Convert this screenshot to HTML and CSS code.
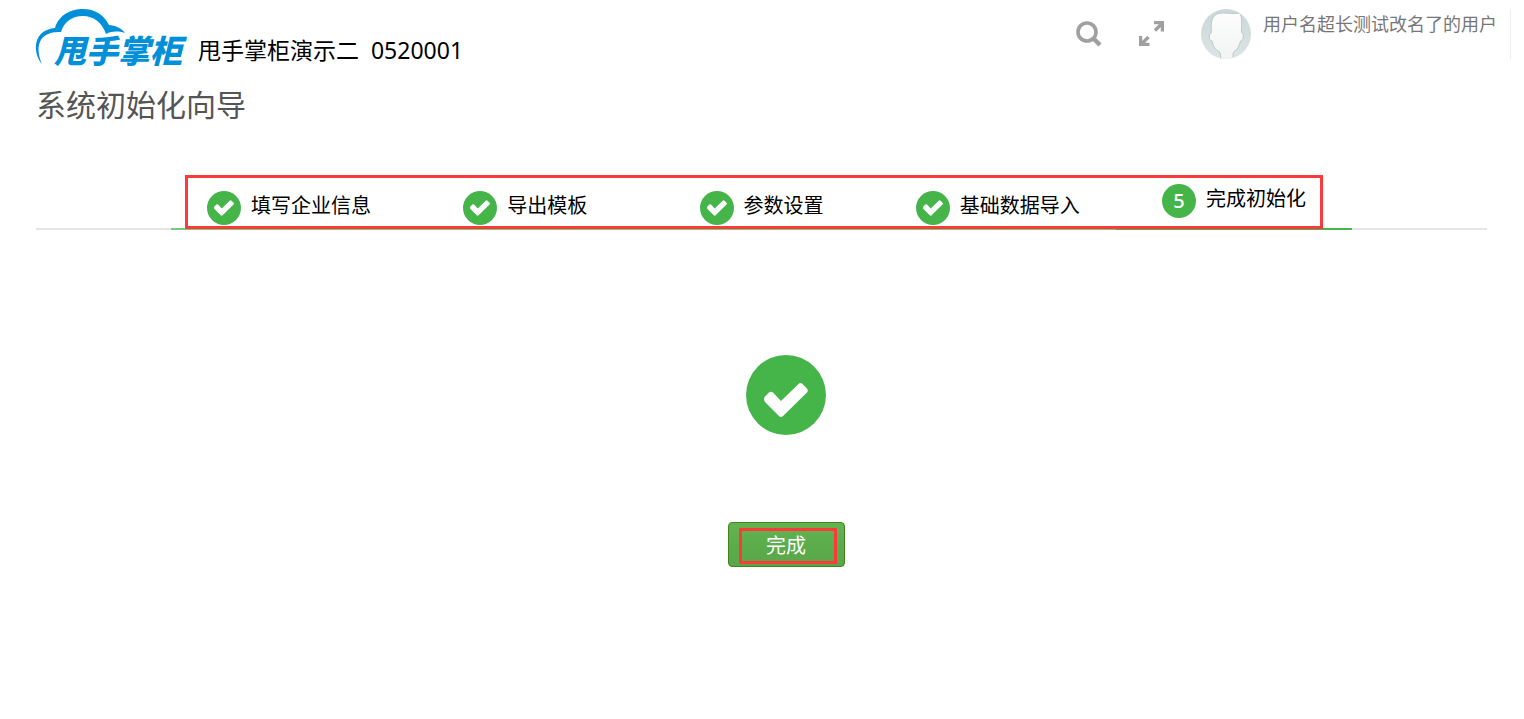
FILE: index.html
```
<!DOCTYPE html>
<html lang="zh-CN">
<head>
  <meta charset="UTF-8" />
  <meta name="viewport" content="width=device-width, initial-scale=1.0"/>
  <title>系统初始化向导</title>
  <link rel="stylesheet" href="styles.css">
</head>
<body>

  <header class="header">
    <a href="#" class="logo">
      <svg width="156" height="64" viewBox="0 0 156 64">
        <path d="M6 55C-4 43-3 21 19 19C23 5 36 0 47 0C59 0 68 6 73 16C82 17 86 20 89 24C82 22 76 22 70 25C66 13 57 7 47 7C36 7 28 13 25 23C4 22-2 36 6 55Z" fill="#008fd9"/>
        <text x="18" y="54" class="logo-text">甩手掌柜</text>
      </svg>
    </a>
    <span class="company">甩手掌柜演示二&nbsp; 0520001</span>

    <div class="tools">
      <button type="button" class="icon-btn" aria-label="搜索">
        <svg width="26" height="26" viewBox="0 0 26 26" fill="none" stroke="#a0a0a0">
          <circle cx="11" cy="11" r="9" stroke-width="3.600"/>
          <path d="M17.500 17.500L24 24" stroke-width="4.500"/>
        </svg>
      </button>
      <button type="button" class="icon-btn" aria-label="全屏">
        <svg width="26" height="26" viewBox="0 0 26 26" fill="none" stroke="#a0a0a0" stroke-width="3.300">
          <path d="M15 1.600H23.400V10.500M23 2.500L16 9.500M1.600 15V23.400H10.500M2.500 23L9.500 16"/>
        </svg>
      </button>
    </div>

    <div class="user">
      <svg width="50" height="50" viewBox="0 0 50 50">
        <defs>
          <linearGradient id="face" x1="0" y1="0" x2="0" y2="1">
            <stop offset="0" stop-color="#fcfdfc"/>
            <stop offset="1" stop-color="#f1f4f3"/>
          </linearGradient>
          <linearGradient id="back" x1="0" y1="0" x2="0" y2="1">
            <stop offset="0" stop-color="#cdd7d7"/>
            <stop offset="1" stop-color="#dce4e4"/>
          </linearGradient>
          <clipPath id="round"><circle cx="25" cy="25" r="25"/></clipPath>
        </defs>
        <g clip-path="url(#round)">
          <rect width="50" height="50" fill="url(#back)"/>
          <path d="M10.500 23.500C9.500 14 10.500 7 17 4.500C24 3 32 5.500 39 4C41.500 9 40.500 17 40.500 23.500C43.500 24 42.500 32 39.500 32C38 38 36 41 33 42.500C31.500 44 32 47 32.500 51H19.500C20 47 19.500 44 18 42.500C14.500 40.500 12 37.500 11 32C7.500 31.500 7.500 25 10.500 23.500Z" fill="url(#face)" stroke="#bcc8c8"/>
        </g>
      </svg>
      <span class="user-name">用户名超长测试改名了的用户</span>
    </div>
  </header>

  <main class="wizard">
    <h1>系统初始化向导</h1>

    <div class="steps-bar">
      <ol class="steps">
        <li class="step">
          <span class="badge"><svg width="20" height="20" viewBox="0 0 44 44"><use href="#tick"/></svg></span>填写企业信息
        </li>
        <li class="step">
          <span class="badge"><svg width="20" height="20" viewBox="0 0 44 44"><use href="#tick"/></svg></span>导出模板
        </li>
        <li class="step">
          <span class="badge"><svg width="20" height="20" viewBox="0 0 44 44"><use href="#tick"/></svg></span>参数设置
        </li>
        <li class="step">
          <span class="badge"><svg width="20" height="20" viewBox="0 0 44 44"><use href="#tick"/></svg></span>基础数据导入
        </li>
        <li class="step active">
          <span class="badge">5</span>完成初始化
        </li>
      </ol>
    </div>

    <div class="result">
      <svg width="80" height="80" viewBox="0 0 80 80">
        <circle cx="40" cy="40" r="40" fill="#45b549"/>
        <g transform="translate(18 23)">
          <path id="tick" d="M1 18.500L5 14.500Q7 13 9 14.500L17 23L34.500 6Q36.500 4 38.500 6L43 10.500Q44.500 12.500 43 14.500L19 38Q17 40 15 38L1 24Q-1 21 1 18.500Z" fill="#fff"/>
        </g>
      </svg>
      <button type="button" class="finish">完成</button>
    </div>
  </main>

</body>
</html>
```
FILE: styles.css
```
* {
  box-sizing: border-box;
}

body {
  margin: 0;
  background: #fff;
  color: #000;
  font-family: "Noto Sans", "Noto Sans CJK SC", sans-serif;
}

svg {
  display: block;
}

/* header */
.header {
  display: flex;
  align-items: flex-start;
  height: 64px;
  padding: 9px 13px 0 36px;
}

.logo svg {
  overflow: visible;
}

.logo-text {
  font-size: 32px;
  font-weight: 900;
  font-style: italic;
  fill: #008fd9;
}

.company {
  margin: 25px 0 0 6px;
  font-size: 23px;
  line-height: 32px;
}

.tools {
  display: flex;
  gap: 37px;
  margin: 12px 36px 0 auto;
}

.icon-btn {
  padding: 0;
  border: none;
  background: none;
  cursor: pointer;
}

.user {
  display: flex;
  gap: 12px;
  height: 50px;
  padding-right: 13px;
  border-right: 1px solid #eee;
}

.user-name {
  color: #777;
  font-size: 18px;
  line-height: 30px;
}

/* wizard */
.wizard {
  padding: 0 37px 0 36px;
}

h1 {
  margin: 19px 0 0;
  color: #555;
  font-size: 30px;
  font-weight: 400;
  line-height: 44px;
}

.steps-bar {
  display: flex;
  justify-content: center;
  margin-top: 48px;
  border-bottom: 2px solid #e5e5e5;
}

.steps {
  position: relative;
  display: flex;
  flex: 0 1 1181px;
  margin: 0 0 -2px;
  padding: 0;
  list-style: none;
}

/* red outline around the steps */
.steps::after {
  content: "";
  position: absolute;
  top: 0;
  right: 29px;
  bottom: 1px;
  left: 14px;
  border: 3px solid #fc3a3a;
}

.step {
  display: flex;
  flex: 1;
  justify-content: center;
  gap: 10px;
  padding-top: 16px;
  height: 55px;
  border-bottom: 2px solid #78c97b;
  font-size: 20px;
  line-height: 30px;
  white-space: nowrap;
}

.step.active {
  padding-top: 9px;
  border-bottom-color: #45b549;
}

.badge {
  display: flex;
  align-items: center;
  justify-content: center;
  width: 34px;
  height: 34px;
  border-radius: 50%;
  background: #45b549;
  color: #fff;
  font-weight: 500;
}

/* result */
.result {
  display: flex;
  flex-direction: column;
  align-items: center;
  gap: 87px;
  padding: 125px 0 40px 49px;
}

.finish {
  position: relative;
  width: 117px;
  height: 45px;
  padding: 2px 0 0;
  border: 1px solid #41831a;
  border-radius: 4px;
  background: linear-gradient(#62b350, #58a648);
  color: #fff;
  font-family: inherit;
  font-size: 20px;
  line-height: 28px;
  cursor: pointer;
}

.finish::after {
  content: "";
  position: absolute;
  top: 5px;
  right: 7px;
  bottom: 2px;
  left: 10px;
  border: 3px solid #fc3a3a;
}
```
